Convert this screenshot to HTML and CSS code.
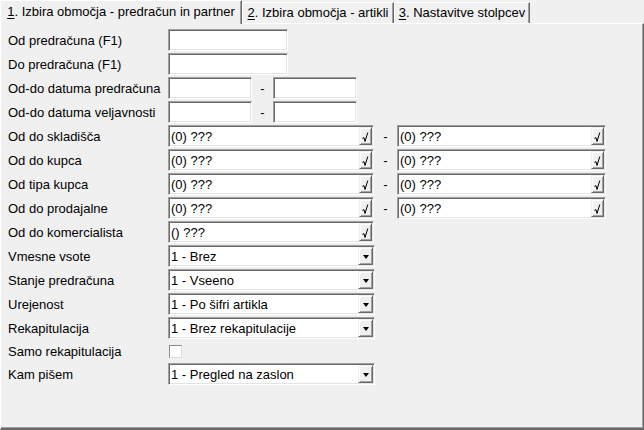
FILE: index.html
```html
<!DOCTYPE html>
<html lang="sl">
<head>
<meta charset="utf-8">
<title>Predračuni</title>
<link rel="stylesheet" href="styles.css">
</head>
<body>
<div class="window">
  <div class="tabs">
    <div class="tab active"><span><u>1</u>. Izbira območja - predračun in partner</span></div>
    <div class="tab t2"><span><u>2</u>. Izbira območja - artikli</span></div>
    <div class="tab t3"><span><u>3</u>. Nastavitve stolpcev</span></div>
  </div>
  <div class="panel">
    <div class="form">
      <div class="label">Od predračuna (F1)</div>
      <div class="fields"><div class="box txt"></div></div>

      <div class="label">Do predračuna (F1)</div>
      <div class="fields"><div class="box txt"></div></div>

      <div class="label">Od-do datuma predračuna</div>
      <div class="fields"><div class="box date"></div><span class="sep date-sep">-</span><div class="box date"></div></div>

      <div class="label">Od-do datuma veljavnosti</div>
      <div class="fields"><div class="box date"></div><span class="sep date-sep">-</span><div class="box date"></div></div>

      <div class="label">Od do skladišča</div>
      <div class="fields">
        <div class="box lookup"><span class="val">(0) ???</span><span class="btn"><svg class="tick" width="7" height="10" viewBox="0 0 7 10"><polyline points="0.5,6.5 2,5.5 3,9.5 5.8,0.5"/></svg></span></div>
        <span class="sep look-sep">-</span>
        <div class="box lookup wide"><span class="val">(0) ???</span><span class="btn"><svg class="tick" width="7" height="10" viewBox="0 0 7 10"><polyline points="0.5,6.5 2,5.5 3,9.5 5.8,0.5"/></svg></span></div>
      </div>

      <div class="label">Od do kupca</div>
      <div class="fields">
        <div class="box lookup"><span class="val">(0) ???</span><span class="btn"><svg class="tick" width="7" height="10" viewBox="0 0 7 10"><polyline points="0.5,6.5 2,5.5 3,9.5 5.8,0.5"/></svg></span></div>
        <span class="sep look-sep">-</span>
        <div class="box lookup wide"><span class="val">(0) ???</span><span class="btn"><svg class="tick" width="7" height="10" viewBox="0 0 7 10"><polyline points="0.5,6.5 2,5.5 3,9.5 5.8,0.5"/></svg></span></div>
      </div>

      <div class="label">Od tipa kupca</div>
      <div class="fields">
        <div class="box lookup"><span class="val">(0) ???</span><span class="btn"><svg class="tick" width="7" height="10" viewBox="0 0 7 10"><polyline points="0.5,6.5 2,5.5 3,9.5 5.8,0.5"/></svg></span></div>
        <span class="sep look-sep">-</span>
        <div class="box lookup wide"><span class="val">(0) ???</span><span class="btn"><svg class="tick" width="7" height="10" viewBox="0 0 7 10"><polyline points="0.5,6.5 2,5.5 3,9.5 5.8,0.5"/></svg></span></div>
      </div>

      <div class="label">Od do prodajalne</div>
      <div class="fields">
        <div class="box lookup"><span class="val">(0) ???</span><span class="btn"><svg class="tick" width="7" height="10" viewBox="0 0 7 10"><polyline points="0.5,6.5 2,5.5 3,9.5 5.8,0.5"/></svg></span></div>
        <span class="sep look-sep">-</span>
        <div class="box lookup wide"><span class="val">(0) ???</span><span class="btn"><svg class="tick" width="7" height="10" viewBox="0 0 7 10"><polyline points="0.5,6.5 2,5.5 3,9.5 5.8,0.5"/></svg></span></div>
      </div>

      <div class="label">Od do komercialista</div>
      <div class="fields">
        <div class="box lookup"><span class="val">() ???</span><span class="btn"><svg class="tick" width="7" height="10" viewBox="0 0 7 10"><polyline points="0.5,6.5 2,5.5 3,9.5 5.8,0.5"/></svg></span></div>
      </div>

      <div class="label">Vmesne vsote</div>
      <div class="fields"><div class="box select"><span class="val">1 - Brez</span><span class="btn drop"><i class="arrow"></i></span></div></div>

      <div class="label">Stanje predračuna</div>
      <div class="fields"><div class="box select"><span class="val">1 - Vseeno</span><span class="btn drop"><i class="arrow"></i></span></div></div>

      <div class="label">Urejenost</div>
      <div class="fields"><div class="box select"><span class="val">1 - Po šifri artikla</span><span class="btn drop"><i class="arrow"></i></span></div></div>

      <div class="label">Rekapitulacija</div>
      <div class="fields"><div class="box select"><span class="val">1 - Brez rekapitulacije</span><span class="btn drop"><i class="arrow"></i></span></div></div>

      <div class="label">Samo rekapitulacija</div>
      <div class="fields"><span class="check"></span></div>

      <div class="label">Kam pišem</div>
      <div class="fields"><div class="box select"><span class="val">1 - Pregled na zaslon</span><span class="btn drop"><i class="arrow"></i></span></div></div>
    </div>
  </div>
</div>
</body>
</html>
```

FILE: styles.css
```css
html, body {
  margin: 0;
  padding: 0;
  background: #f0f0f0;
}

body {
  font-family: "Liberation Sans", Arial, sans-serif;
  font-size: 13px;
  color: #000;
}

.window {
  width: 644px;
  height: 430px;
  display: flex;
  flex-direction: column;
}

/* tab strip */
.tabs {
  display: flex;
  align-items: flex-end;
  height: 23px;
  flex: none;
}

.tab {
  box-sizing: border-box;
  height: 21px;
  display: flex;
  align-items: center;
  justify-content: center;
  white-space: nowrap;
  background: #f0f0f0;
  border-left: 1px solid #fff;
  border-top: 1px solid #fff;
  border-right: 1px solid #696969;
  box-shadow: inset -1px 0 0 #a0a0a0;
  padding-bottom: 1px;
}

.tab.active {
  width: 242px;
  height: 24px;
  margin-bottom: -1px;
  position: relative;
  z-index: 1;
  padding-bottom: 2px;
}

.tab.t2 { width: 152px; }
.tab.t3 { width: 136px; }

.tab u {
  text-decoration: underline;
  text-underline-offset: 2px;
}

/* page body */
.panel {
  flex: 1;
  box-sizing: border-box;
  border-top: 1px solid #fff;
  border-left: 1px solid #fff;
  border-right: 1px solid #696969;
  border-bottom: 2px solid #696969;
  box-shadow: inset -1px -1px 0 #a0a0a0;
}

/* label column + field column; the checkbox row is a little lower */
.form {
  display: grid;
  grid-template-columns: 160px auto;
  grid-template-rows: repeat(13, 22px) 20px 22px;
  row-gap: 2px;
  padding: 5px 0 0 7px;
}

.label {
  display: flex;
  align-items: center;
  white-space: nowrap;
  padding-top: 1px;
}

.fields {
  display: flex;
  align-items: center;
}

/* sunken edit boxes */
.box {
  box-sizing: border-box;
  height: 22px;
  padding: 1px;
  background: #fff;
  border: 1px solid;
  border-color: #a0a0a0 #fff #fff #a0a0a0;
  box-shadow: inset 1px 1px 0 #696969, inset -1px -1px 0 #e3e3e3;
  display: flex;
  align-items: center;
}

.txt { width: 120px; }
.date { width: 84px; }
.lookup { width: 206px; }
.lookup.wide { width: 209px; }
.select { width: 207px; }

.sep {
  text-align: center;
  flex: none;
}

.date-sep { width: 21px; }
.look-sep { width: 23px; }

.val {
  flex: 1;
  padding-left: 1px;
  white-space: nowrap;
  overflow: hidden;
}

/* raised buttons inside the boxes */
.btn {
  box-sizing: border-box;
  flex: none;
  width: 13px;
  height: 18px;
  background: #f0f0f0;
  border-top: 1px solid #f0f0f0;
  border-left: 1px solid #f0f0f0;
  border-right: 1px solid #696969;
  border-bottom: 1px solid #696969;
  box-shadow: inset 1px 1px 0 #fff, inset -1px -1px 0 #a0a0a0;
  display: flex;
  align-items: center;
  justify-content: center;
}

.btn.drop { width: 15px; }

.tick {
  display: block;
  fill: none;
  stroke: #000;
  stroke-width: 1;
  margin-top: 1px;
}

.arrow {
  display: block;
  width: 0;
  height: 0;
  border-left: 3.5px solid transparent;
  border-right: 3.5px solid transparent;
  border-top: 4px solid #000;
  margin-top: 1px;
}

.check {
  box-sizing: border-box;
  display: block;
  width: 13px;
  height: 13px;
  margin-left: 1px;
  background: #fff;
  border: 1px solid;
  border-color: #8a8a8a #dcdcdc #dcdcdc #8a8a8a;
}
```
